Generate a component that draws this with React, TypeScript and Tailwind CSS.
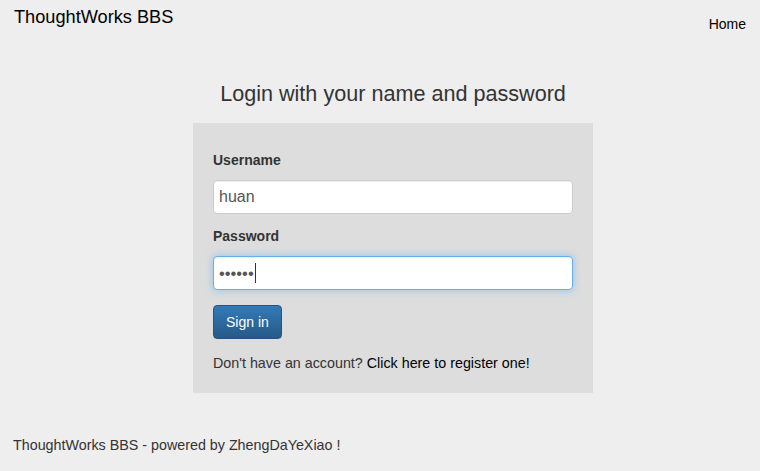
const fieldLabel = "block text-[14px] leading-5 font-bold text-[#333]"

export default function App() {
  return (
    <div className="h-screen bg-[#eeeeee] font-['Liberation_Sans',Arial,sans-serif] text-black">
      <header className="flex h-[50px] items-start justify-between">
        <a className="pl-[14px] pt-[7px] text-[18.2px] leading-5">ThoughtWorks BBS</a>
        <a className="pr-[14px] pt-[14px] text-[14px] leading-5">Home</a>
      </header>

      <main className="ml-[193px] w-[400px]">
        <h1 className="mt-[30px] mb-[15px] text-center text-[21.6px] leading-7 text-[#333]">
          Login with your name and password
        </h1>
        <form className="bg-[#dddddd] px-5 pt-[27px] pb-5">
          <label className={`${fieldLabel} mb-[10px]`}>Username</label>
          <input
            defaultValue="huan"
            readOnly
            className="mb-[12px] block h-[34px] w-full rounded-[4px] border border-[#cccccc] bg-white px-[5px] text-[16px] text-[#555] shadow-[inset_0_1px_1px_rgba(0,0,0,0.075)] outline-none"
          />
          <label className={`${fieldLabel} mb-[10px]`}>Password</label>
          <div className="mb-[15px] flex h-[34px] w-full items-center rounded-[4px] border border-[#66afe9] bg-white px-[5px] shadow-[inset_0_1px_1px_rgba(0,0,0,0.075),0_0_8px_rgba(102,175,233,0.6)]">
            <span className="text-[16.5px] leading-none text-[#555]">••••••</span>
            <span className="ml-[1px] h-5 w-px bg-[#333]" />
          </div>
          <button
            type="button"
            className="mb-[14px] block h-[34px] rounded-[4px] border border-[#245580] bg-gradient-to-b from-[#337ab7] to-[#265a88] px-3 text-[14px] text-white"
          >
            Sign in
          </button>
          <p className="text-[14.3px] leading-5 text-[#333]">
            Don't have an account? <a className="text-black">Click here to register one!</a>
          </p>
        </form>
      </main>

      <footer className="mt-[42px] pl-[13px] text-[14.3px] leading-5 text-[#333]">
        ThoughtWorks BBS - powered by ZhengDaYeXiao !
      </footer>
    </div>
  )
}
